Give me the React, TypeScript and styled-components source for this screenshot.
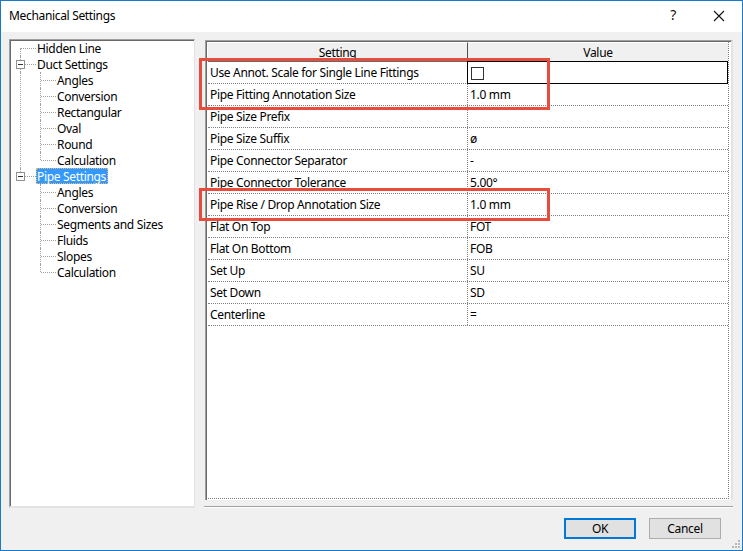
import React from "react";
import styled, { createGlobalStyle } from "styled-components";

const GlobalStyle = createGlobalStyle`
  html, body {
    margin: 0;
    padding: 0;
    background: #ffffff;
  }
  body {
    font-family: "Noto Sans", "Liberation Sans", sans-serif;
    font-size: 12px;
    letter-spacing: -0.33px;
    color: #000;
  }
  * {
    box-sizing: border-box;
  }
`;

type TreeNode = {
  label: string;
  selected?: boolean;
  children?: string[];
};

const tree: TreeNode[] = [
  { label: "Hidden Line" },
  {
    label: "Duct Settings",
    children: [
      "Angles",
      "Conversion",
      "Rectangular",
      "Oval",
      "Round",
      "Calculation",
    ],
  },
  {
    label: "Pipe Settings",
    selected: true,
    children: [
      "Angles",
      "Conversion",
      "Segments and Sizes",
      "Fluids",
      "Slopes",
      "Calculation",
    ],
  },
];

type Row = {
  setting: string;
  value?: string;
  checkbox?: boolean;
  focused?: boolean;
};

const rows: Row[] = [
  {
    setting: "Use Annot. Scale for Single Line Fittings",
    checkbox: true,
    focused: true,
  },
  { setting: "Pipe Fitting Annotation Size", value: "1.0 mm" },
  { setting: "Pipe Size Prefix", value: "" },
  { setting: "Pipe Size Suffix", value: "ø" },
  { setting: "Pipe Connector Separator", value: "-" },
  { setting: "Pipe Connector Tolerance", value: "5.00°" },
  { setting: "Pipe Rise / Drop Annotation Size", value: "1.0 mm" },
  { setting: "Flat On Top", value: "FOT" },
  { setting: "Flat On Bottom", value: "FOB" },
  { setting: "Set Up", value: "SU" },
  { setting: "Set Down", value: "SD" },
  { setting: "Centerline", value: "=" },
];

const CloseIcon = () => (
  <svg width="12" height="12" viewBox="0 0 12 12">
    <path d="M1 1 L11 11 M11 1 L1 11" stroke="#111" strokeWidth="1.1" />
  </svg>
);

const ExpandBox = () => (
  <Box>
    <svg width="9" height="9" viewBox="0 0 9 9">
      <rect x="0.5" y="0.5" width="8" height="8" fill="#fff" stroke="#919191" />
      <path d="M2 4.5 H7" stroke="#333" strokeWidth="1" />
    </svg>
  </Box>
);

export default function App() {
  return (
    <>
      <GlobalStyle />
      <Window>
        <TitleBar>
          <Title>Mechanical Settings</Title>
          <TitleButtons>
            <Help>?</Help>
            <CloseButton>
              <CloseIcon />
            </CloseButton>
          </TitleButtons>
        </TitleBar>

        <Body>
          <Main>
            <TreePanel>
              {tree.map((node, i) => (
                <div key={node.label}>
                  <TreeRow>
                    <RootGuide first={i === 0} last={i === tree.length - 1}>
                      {node.children && <ExpandBox />}
                    </RootGuide>
                    <Label selected={node.selected}>{node.label}</Label>
                  </TreeRow>
                  {node.children && (
                    <Children continued={i < tree.length - 1}>
                      {node.children.map((child, j) => (
                        <TreeRow key={child}>
                          <ChildGuide last={j === node.children!.length - 1} />
                          <Label>{child}</Label>
                        </TreeRow>
                      ))}
                    </Children>
                  )}
                </div>
              ))}
            </TreePanel>

            <RightColumn>
              <GridPanel>
                <GridBody>
                  <HeaderRow>
                    <HeaderCell>Setting</HeaderCell>
                    <HeaderCell last>Value</HeaderCell>
                  </HeaderRow>
                  {rows.map((row) => (
                    <GridRow key={row.setting}>
                      <SettingCell>{row.setting}</SettingCell>
                      <ValueCell focused={row.focused}>
                        {row.checkbox ? <CheckBox /> : row.value}
                      </ValueCell>
                    </GridRow>
                  ))}
                </GridBody>
              </GridPanel>
              <Separator />
            </RightColumn>
          </Main>

          <Footer>
            <Button primary>OK</Button>
            <Button>Cancel</Button>
          </Footer>
          <Grip>
            <svg width="10" height="10" viewBox="0 0 10 10">
              <g fill="#b8b8b8">
                <rect x="7" y="1" width="2" height="2" />
                <rect x="4" y="4" width="2" height="2" />
                <rect x="7" y="4" width="2" height="2" />
                <rect x="1" y="7" width="2" height="2" />
                <rect x="4" y="7" width="2" height="2" />
                <rect x="7" y="7" width="2" height="2" />
              </g>
            </svg>
          </Grip>
        </Body>

        <Highlight style={{ top: 57, height: 52 }} />
        <Highlight style={{ top: 187, height: 33 }} />
      </Window>
    </>
  );
}

const Window = styled.div`
  position: relative;
  width: 743px;
  height: 551px;
  border: 1px solid #1979ca;
  display: flex;
  flex-direction: column;
  background: #f0f0f0;
  overflow: hidden;
`;

const TitleBar = styled.div`
  height: 31px;
  flex: none;
  background: #ffffff;
  display: flex;
  align-items: center;
  justify-content: space-between;
  padding-left: 8px;
`;

const Title = styled.div`
  font-size: 12px;
  color: #000;
  margin-top: -2px;
`;

const TitleButtons = styled.div`
  display: flex;
  align-items: center;
  height: 100%;
`;

const Help = styled.div`
  width: 46px;
  text-align: center;
  font-size: 14px;
  color: #111;
  margin-top: -4px;
`;

const CloseButton = styled.div`
  width: 46px;
  display: flex;
  justify-content: center;
  margin-top: -2px;
`;

const Body = styled.div`
  position: relative;
  flex: 1;
  display: flex;
  flex-direction: column;
  padding: 7px 9px 0 8px;
`;

const Main = styled.div`
  display: flex;
  gap: 10px;
  height: 469px;
`;

const TreePanel = styled.div`
  width: 186px;
  height: 100%;
  background: #ffffff;
  border-top: 1px solid #a0a0a0;
  border-left: 1px solid #a0a0a0;
  border-right: 1px solid #e3e3e3;
  border-bottom: 2px solid #e3e3e3;
  box-shadow: inset 1px 1px 0 #696969;
  padding: 0 0 0 3px;
`;

const TreeRow = styled.div`
  display: flex;
  align-items: center;
  height: 16px;
  white-space: nowrap;
`;

const RootGuide = styled.div<{ first?: boolean; last?: boolean }>`
  position: relative;
  width: 24px;
  height: 16px;
  flex: none;

  &::before {
    content: "";
    position: absolute;
    left: 7px;
    top: ${(p) => (p.first ? "8px" : "0")};
    bottom: ${(p) => (p.last ? "8px" : "0")};
    border-left: 1px dotted #a0a0a0;
  }

  &::after {
    content: "";
    position: absolute;
    left: 8px;
    right: 1px;
    top: 8px;
    border-top: 1px dotted #a0a0a0;
  }
`;

const Box = styled.span`
  position: absolute;
  left: 3px;
  top: 4px;
  width: 9px;
  height: 9px;
  z-index: 1;
  display: flex;
`;

const Children = styled.div<{ continued?: boolean }>`
  position: relative;
  padding-left: 20px;

  &::before {
    content: "";
    display: ${(p) => (p.continued ? "block" : "none")};
    position: absolute;
    left: 7px;
    top: 0;
    bottom: 0;
    border-left: 1px dotted #a0a0a0;
  }
`;

const ChildGuide = styled.div<{ last?: boolean }>`
  position: relative;
  width: 24px;
  height: 16px;
  flex: none;

  &::before {
    content: "";
    position: absolute;
    left: 7px;
    top: 0;
    bottom: ${(p) => (p.last ? "8px" : "0")};
    border-left: 1px dotted #a0a0a0;
  }

  &::after {
    content: "";
    position: absolute;
    left: 8px;
    right: 1px;
    top: 8px;
    border-top: 1px dotted #a0a0a0;
  }
`;

const Label = styled.span<{ selected?: boolean }>`
  display: inline-flex;
  align-items: center;
  height: 16px;
  padding: 0 2px 0 1px;
  margin-left: -1px;
  color: ${(p) => (p.selected ? "#ffffff" : "#000000")};
  background: ${(p) => (p.selected ? "#3399ff" : "transparent")};
  outline: ${(p) => (p.selected ? "1px dotted #e8b878" : "none")};
  outline-offset: -1px;
`;

const RightColumn = styled.div`
  width: 528px;
  display: flex;
  flex-direction: column;
`;

const GridPanel = styled.div`
  margin-top: 1px;
  height: 461px;
  background: #ffffff;
  border-top: 1px solid #a0a0a0;
  border-left: 1px solid #a0a0a0;
  border-right: 2px solid #e3e3e3;
  box-shadow: inset 1px 1px 0 #696969;
  padding: 1px 2px 1px 2px;
  display: flex;
`;

const GridBody = styled.div`
  flex: 1;
  display: flex;
  flex-direction: column;
  border-right: 1px dotted #808080;
  border-bottom: 1px dotted #808080;
`;

const HeaderRow = styled.div`
  display: grid;
  grid-template-columns: 260px 1fr;
  height: 20px;
  flex: none;
  background: #f0f0f0;
  border-bottom: 1px solid #696969;
`;

const HeaderCell = styled.div<{ last?: boolean }>`
  display: flex;
  align-items: center;
  justify-content: center;
  border-right: ${(p) => (p.last ? "none" : "1px solid #505050")};
  border-top: 1px solid #ffffff;
  padding-top: 1px;
`;

const GridRow = styled.div`
  display: grid;
  grid-template-columns: 260px 1fr;
  height: 22px;
  flex: none;
  border-bottom: 1px dotted #808080;
`;

const SettingCell = styled.div`
  display: flex;
  align-items: center;
  padding-left: 2px;
  border-right: 1px dotted #808080;
  white-space: nowrap;
  overflow: hidden;
`;

const ValueCell = styled.div<{ focused?: boolean }>`
  display: flex;
  align-items: center;
  padding-left: 2px;
  margin-left: ${(p) => (p.focused ? "-1px" : "0")};
  margin-top: ${(p) => (p.focused ? "-1px" : "0")};
  margin-bottom: ${(p) => (p.focused ? "-1px" : "0")};
  border: ${(p) => (p.focused ? "1px solid #000000" : "none")};
`;

const CheckBox = styled.span`
  width: 13px;
  height: 13px;
  margin-left: 1px;
  margin-top: 2px;
  border: 1px solid #333333;
  background: #ffffff;
`;

const Separator = styled.div`
  margin-top: 6px;
  margin-left: -1px;
  height: 2px;
  border-top: 1px solid #a0a0a0;
  border-bottom: 1px solid #ffffff;
`;

const Footer = styled.div`
  display: flex;
  justify-content: flex-end;
  gap: 13px;
  padding: 10px 12px 0 0;
`;

const Button = styled.div<{ primary?: boolean }>`
  width: 72px;
  height: 21px;
  display: flex;
  align-items: center;
  justify-content: center;
  background: #e1e1e1;
  border: ${(p) => (p.primary ? "2px solid #0078d7" : "1px solid #adadad")};
  font-size: 12px;
`;

const Grip = styled.div`
  position: absolute;
  right: 1px;
  bottom: 1px;
  display: flex;
`;

const Highlight = styled.div`
  position: absolute;
  left: 198px;
  width: 351px;
  border: 3px solid #e74c3c;
  pointer-events: none;
`;
